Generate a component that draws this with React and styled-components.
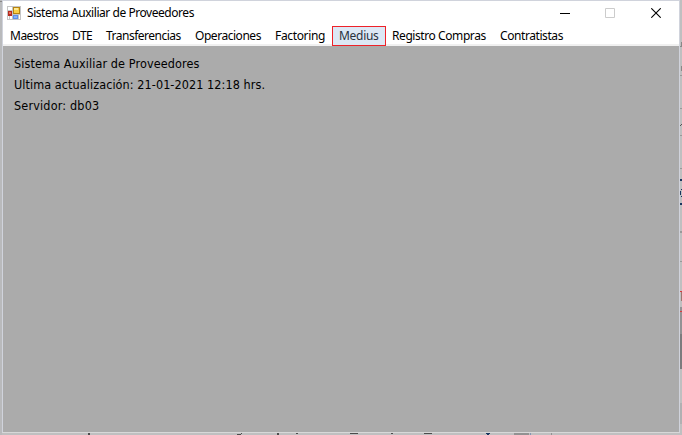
import React from 'react';
import styled, { createGlobalStyle } from 'styled-components';

const GlobalStyle = createGlobalStyle`
  * { box-sizing: border-box; }
  body { margin: 0; overflow: hidden; background: #bfbfbf; }
`;

const Desktop = styled.div`
  position: relative;
  width: 682px;
  height: 435px;
  padding: 0 2px 2px;
  background: linear-gradient(90deg, #b9babc 2px, #bfbfc0 2px);
  overflow: hidden;
`;

const Window = styled.main`
  display: flex;
  flex-direction: column;
  width: 678px;
  height: 433px;
  border: 1px solid #d0d3dc;
  border-bottom-color: #d8d8d8;
  background: #ababab;
  color: #000;
`;

const TitleBar = styled.header`
  display: flex;
  align-items: flex-start;
  height: 25px;
  padding-left: 4px;
  background: #fff;
`;

const AppIcon = styled.svg`
  flex: none;
  margin-top: 5px;
`;

const Title = styled.h1`
  flex: 1;
  margin: 0 0 0 6px;
  font: 400 12px/24px "Noto Sans", sans-serif;
  letter-spacing: ${({ $spacing }) => $spacing}px;
  white-space: nowrap;
`;

const WindowButton = styled.button`
  display: grid;
  place-items: center;
  width: ${({ $width }) => $width}px;
  height: 24px;
  padding: 0 0 0 ${({ $inset = 0 }) => $inset}px;
  border: 0;
  background: transparent;
`;

const MenuBar = styled.nav`
  display: flex;
  height: 20px;
  background: #fff;
  box-shadow: inset 0 -2px #f0f0f0;
`;

const MenuItem = styled.button`
  width: ${({ $width }) => $width}px;
  height: 20px;
  flex: none;
  padding: 0 0 0 ${({ $inset = 7 }) => $inset}px;
  border: ${({ $active }) => ($active ? '1px solid #ee2229' : '0')};
  background: ${({ $active }) => ($active ? '#dce8f5' : 'transparent')};
  color: ${({ $active }) => ($active ? '#29313d' : '#000')};
  font: 12px/18px "Noto Sans", sans-serif;
  letter-spacing: ${({ $spacing }) => $spacing}px;
  text-align: left;
  white-space: nowrap;
`;

const Information = styled.section`
  display: flex;
  flex-direction: column;
  padding: 7px 11px;
`;

const InfoLine = styled.p`
  margin: 0;
  font: 12.5px/21px "DejaVu Sans Condensed", "DejaVu Sans", sans-serif;
  font-stretch: condensed;
  letter-spacing: ${({ $spacing }) => $spacing}px;
  white-space: nowrap;
`;

const EdgeDetails = styled.svg`
  position: absolute;
  inset: 0;
  pointer-events: none;
`;

const menus = [
  ['Maestros', 62, -0.5], ['DTE', 34, -0.5], ['Transferencias', 89, -0.5],
  ['Operaciones', 80, -0.46], ['Factoring', 64, -0.35], ['Medius', 54, -0.3],
  ['Registro Compras', 107, -0.42], ['Contratistas', 77, -0.42],
];

const insets = { Medius: 6, 'Registro Compras': 6 };

function FormIcon() {
  return (
    <AppIcon width="14" height="14" viewBox="0 0 14 14" shapeRendering="crispEdges">
      <path fill="#c5c5c5" d="M0 0h14v14H0z" />
      <path fill="#fff" d="M1 1h4v3H1zM1 10h1v3H1zM3 10h2v3H3zM12 9h1v4h-1z" />
      <path fill="#b42b20" d="M1 5h4v5H1z" />
      <path fill="#ed6c55" d="M2 6h2v2H2z" />
      <path fill="#b78310" d="M6 1h7v7H6z" />
      <path fill="#f9cf45" d="M7 2h5v5H7z" />
      <path fill="#ffe993" d="M7 2h4v2H7z" />
      <path fill="#5d8fe8" d="M6 9h5v4H6z" />
      <path fill="#86b2f8" d="M7 10h3v2H7z" />
    </AppIcon>
  );
}

export default function App() {
  return (
    <Desktop>
      <GlobalStyle />
      <Window>
        <TitleBar>
          <FormIcon />
          <Title $spacing={-0.45}>Sistema Auxiliar de Proveedores</Title>
          <WindowButton $width={46} aria-label="Minimizar">
            <svg width="10" height="10" shapeRendering="crispEdges"><path d="M0 5h10v1H0z" /></svg>
          </WindowButton>
          <WindowButton $width={44} aria-label="Maximizar">
            <svg width="10" height="10"><path d="M.5.5h9v9h-9z" fill="none" stroke="#ccc" /></svg>
          </WindowButton>
          <WindowButton $width={47} $inset={1} aria-label="Cerrar">
            <svg width="10" height="10"><path d="m.3.3 9.4 9.4m0-9.4L.3 9.7" fill="none" stroke="#000" strokeWidth="1.1" /></svg>
          </WindowButton>
        </TitleBar>
        <MenuBar>
          {menus.map(([label, width, spacing]) => (
            <MenuItem key={label} $width={width} $spacing={spacing} $inset={insets[label]} $active={label === 'Medius'}>{label}</MenuItem>
          ))}
        </MenuBar>
        <Information>
          <InfoLine $spacing={0.12}>Sistema Auxiliar de Proveedores</InfoLine>
          <InfoLine $spacing={0.08}>Ultima actualización: 21-01-2021 12:18 hrs.</InfoLine>
          <InfoLine $spacing={0.18}>Servidor: db03</InfoLine>
        </Information>
      </Window>
      <EdgeDetails width="682" height="435" shapeRendering="crispEdges">
        <path fill="#888" d="M0 1h2v1H0zM680 46h2v1h-2zM681 42h1v4h-1zM681 66h1v5h-1z" />
        <path fill="#999" d="M680 75h2v1h-2zM680 108h2v1h-2zM680 135h2v1h-2zM680 168h2v1h-2zM680 231h2v2h-2zM680 261h2v1h-2z" />
        <path fill="#555" d="M680 125h1v1h-1zM681 124h1v1h-1z" />
        <path fill="#19365f" d="M680 179h2v2h-2zM680 191h1v4h-1zM681 189h1v1h-1zM681 196h1v1h-1zM680 203h2v2h-2z" />
        <path fill="#d63b3e" d="M680 291h2v1h-2zM680 311h2v1h-2z" />
        <path fill="#9c7770" d="M681 292h1v9h-1z" />
        <path fill="#929294" d="M680 307h2v4h-2zM680 312h2v22h-2z" />
        <path fill="#7c7c7e" d="M680 334h2v35h-2z" />
        <path fill="#b0b0b2" d="M680 403h2v21h-2z" />
        <path fill="#4c4c4c" d="M88 433h2v2h-2zM237 434h4v1h-4zM241 433h1v1h-1zM277 433h2v2h-2zM296 433h2v1h-2zM350 433h8v1h-8zM391 433h2v1h-2zM424 433h8v1h-8z" />
        <path fill="#19365f" d="M486 433h4v1h-4zM487 434h2v1h-2z" />
        <path fill="#929292" d="M514 433h15v2h-15zM551 433h1v2h-1z" />
        <path fill="#8395b3" d="M530 433h1v2h-1z" />
      </EdgeDetails>
    </Desktop>
  );
}
